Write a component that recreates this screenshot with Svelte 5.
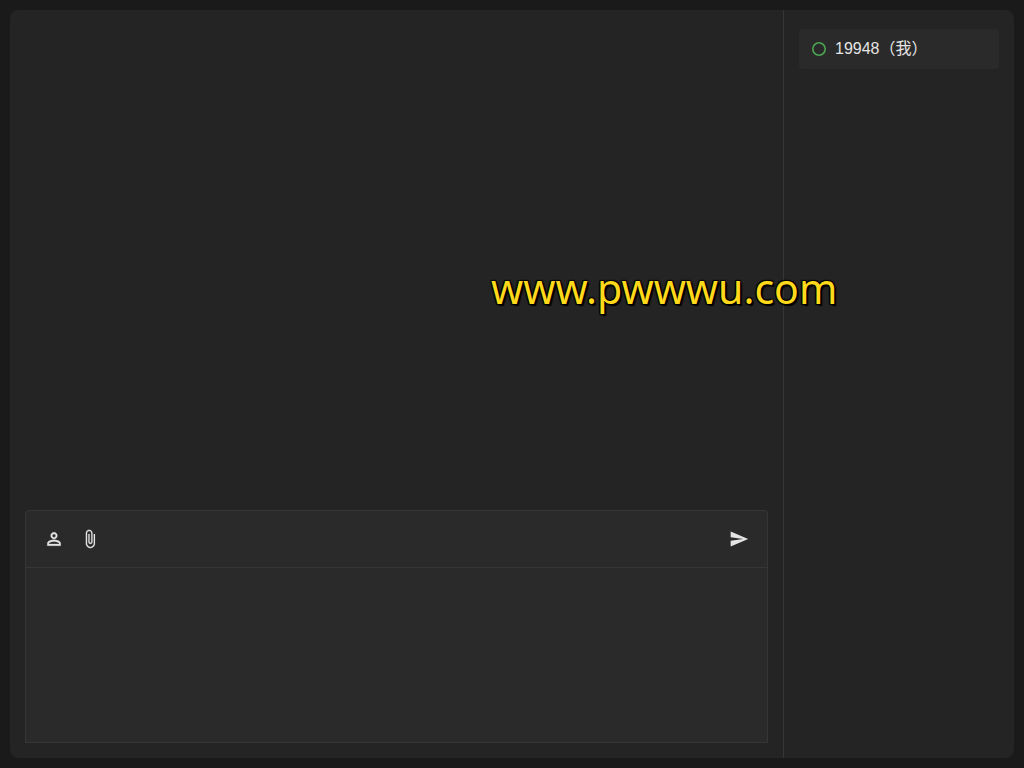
<script>
  let users = $state([{ id: '19948', self: true }])
  let message = $state('')
</script>

<div class="page">
  <div class="card">
    <main class="chat">
      <div class="messages"></div>
      <form class="editor" onsubmit={(e) => e.preventDefault()}>
        <div class="toolbar">
          <button type="button" aria-label="用户">
            <svg viewBox="0 0 24 24" width="20" height="20" fill="currentColor" stroke="currentColor" stroke-width="0.4">
              <path d="M12 5.9a2.1 2.1 0 1 1 0 4.2 2.1 2.1 0 0 1 0-4.2m0 9c2.97 0 6.1 1.46 6.1 2.1v1.1H5.9V17c0-.64 3.13-2.1 6.1-2.1M12 4C9.79 4 8 5.79 8 8s1.79 4 4 4 4-1.79 4-4-1.79-4-4-4m0 9c-2.67 0-8 1.34-8 4v3h16v-3c0-2.66-5.33-4-8-4"/>
            </svg>
          </button>
          <button type="button" aria-label="附件">
            <svg viewBox="0 0 24 24" width="20" height="20" fill="currentColor" stroke="currentColor" stroke-width="0.2">
              <path d="M16.5 6v11.5c0 2.21-1.79 4-4 4s-4-1.79-4-4V5a2.5 2.5 0 0 1 5 0v10.5c0 .55-.45 1-1 1s-1-.45-1-1V6H10v9.5a2.5 2.5 0 0 0 5 0V5c0-2.21-1.79-4-4-4S7 2.79 7 5v12.5c0 3.04 2.46 5.5 5.5 5.5s5.5-2.46 5.5-5.5V6z"/>
            </svg>
          </button>
          <button type="submit" class="send" aria-label="发送">
            <svg viewBox="0 0 24 24" width="20" height="20" fill="currentColor">
              <path d="M2.01 21 23 12 2.01 3 2 10l15 2-15 2z"/>
            </svg>
          </button>
        </div>
        <textarea aria-label="消息" bind:value={message}></textarea>
      </form>
    </main>

    <aside class="sidebar">
      <ul>
        {#each users as user (user.id)}
          <li>
            <svg viewBox="0 0 14 14" width="14" height="14" fill="none" stroke="#4ca653" stroke-width="1.6">
              <circle cx="7" cy="7" r="6.2"/>
            </svg>
            <span>{user.id}{user.self ? '（我）' : ''}</span>
          </li>
        {/each}
      </ul>
    </aside>
  </div>
  <div class="watermark">www.pwwwu.com</div>
</div>

<style>
  :global(body) {
    margin: 0;
    background: #1a1a1a;
  }
  .page {
    box-sizing: border-box;
    height: 100vh;
    padding: 10px;
    color: #e4e4e4;
    font: 16px/24px "Liberation Sans", "Noto Sans CJK TC", sans-serif;
  }
  .card {
    display: flex;
    height: 100%;
    border-radius: 8px;
    background: #242424;
    overflow: hidden;
  }
  .chat {
    flex: 1;
    min-width: 0;
    display: flex;
    flex-direction: column;
    padding: 15px;
  }
  .messages {
    flex: 1;
    overflow-y: auto;
  }
  .editor {
    display: flex;
    flex-direction: column;
    border: 1px solid #363636;
    border-radius: 4px 4px 0 0;
    background: #2a2a2a;
  }
  .toolbar {
    display: flex;
    align-items: center;
    padding: 10px;
    border-bottom: 1px solid #363636;
  }
  button {
    display: flex;
    align-items: center;
    justify-content: center;
    width: 36px;
    height: 36px;
    padding: 0;
    border: 0;
    background: none;
    color: #e4e4e4;
    cursor: pointer;
  }
  .send {
    margin-left: auto;
  }
  textarea {
    box-sizing: border-box;
    width: 100%;
    height: 174px;
    padding: 10px;
    border: 0;
    outline: none;
    resize: none;
    background: none;
    color: inherit;
    font: inherit;
  }
  .sidebar {
    box-sizing: border-box;
    width: 231px;
    padding: 19px 15px;
    border-left: 1px solid #363636;
  }
  ul {
    margin: 0;
    padding: 0;
    list-style: none;
  }
  li {
    display: flex;
    align-items: center;
    gap: 9px;
    padding: 8px 13px;
    border-radius: 4px;
    background: #2a2a2a;
  }
  .watermark {
    position: absolute;
    top: 260px;
    left: 491px;
    color: #ffd91a;
    font: 41px/56px "Noto Sans", sans-serif;
    text-shadow: -1px -1px 1px #000, 1px -1px 1px #000, -1px 1px 1px #000, 2px 2px 1px #000;
    pointer-events: none;
  }
</style>
